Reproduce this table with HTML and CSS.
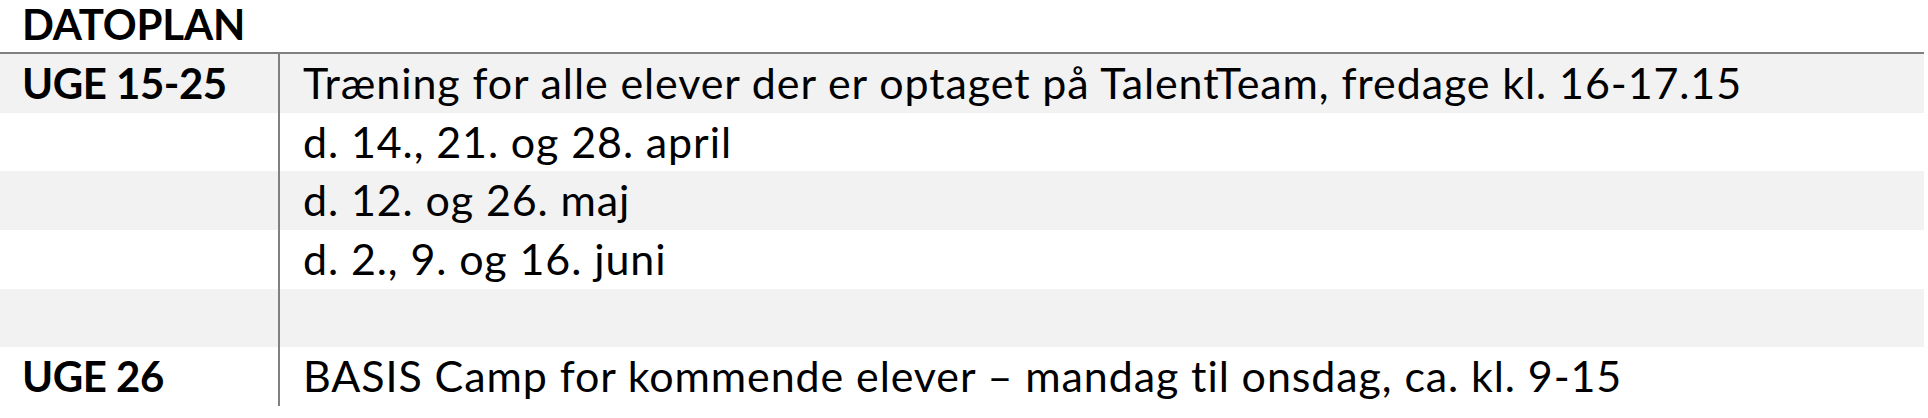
FILE: index.html
```html
<!DOCTYPE html>
<html lang="da">
<head>
<meta charset="utf-8">
<title>Datoplan</title>
<link rel="stylesheet" href="styles.css">
</head>
<body>
<div class="page">
  <h1 class="title">DATOPLAN</h1>
  <div class="plan">
    <div class="row alt"><div class="week">UGE 15-25</div><div class="desc">Træning for alle elever der er optaget på TalentTeam, fredage kl. 16-17.15</div></div>
    <div class="row"><div class="week"></div><div class="desc">d. 14., 21. og 28. april</div></div>
    <div class="row alt"><div class="week"></div><div class="desc">d. 12. og 26. maj</div></div>
    <div class="row"><div class="week"></div><div class="desc">d. 2., 9. og 16. juni</div></div>
    <div class="row alt"><div class="week"></div><div class="desc"></div></div>
    <div class="row"><div class="week">UGE 26</div><div class="desc">BASIS Camp for kommende elever – mandag til onsdag, ca. kl. 9-15</div></div>
  </div>
</div>
</body>
</html>
```
FILE: styles.css
```css
html, body {
  margin: 0;
  padding: 0;
  background: #ffffff;
}
.page {
  width: 1924px;
  font-family: Lato, "Open Sans", sans-serif;
  color: #000000;
}
.title {
  margin: 0;
  height: 52px;
  padding-left: 22px;
  font-size: 42px;
  font-weight: 700;
  letter-spacing: -0.2px;
  line-height: 48px;
  box-sizing: border-box;
}
.plan {
  border-top: 2px solid #808080;
}
.row {
  display: flex;
  height: 58.67px;
  line-height: 58.67px;
}
.row.alt {
  background: #f2f2f2;
}
.week {
  width: 280px;
  flex: none;
  box-sizing: border-box;
  padding-left: 22px;
  font-size: 42px;
  font-weight: 700;
  letter-spacing: -0.5px;
  border-right: 2px solid #808080;
}
.desc {
  padding-left: 23px;
  font-size: 43px;
  letter-spacing: 0.9px;
  white-space: nowrap;
}
```
